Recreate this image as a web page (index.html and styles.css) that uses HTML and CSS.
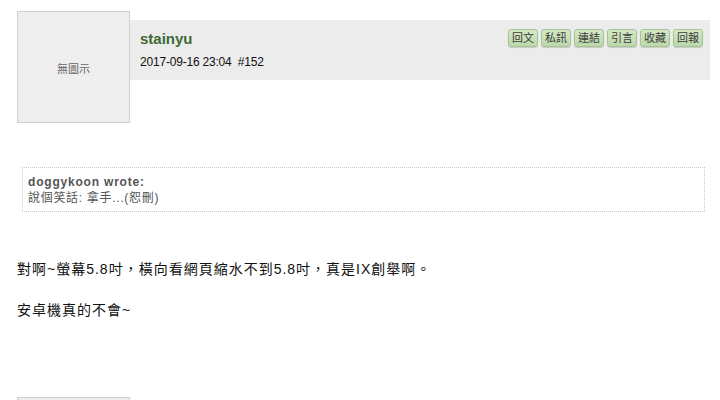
FILE: index.html
```html
<!DOCTYPE html>
<html>
<head>
<meta charset="utf-8">
<link rel="stylesheet" href="styles.css">
</head>
<body>
<div class="post">
  <div class="post-head">
    <div class="avatar">無圖示</div>
    <div class="bar">
      <div class="who">
        <div class="name">stainyu</div>
        <div class="meta">2017-09-16 23:04&nbsp;&nbsp;#152</div>
      </div>
      <div class="actions">
        <span class="btn">回文</span>
        <span class="btn">私訊</span>
        <span class="btn">連結</span>
        <span class="btn">引言</span>
        <span class="btn">收藏</span>
        <span class="btn">回報</span>
      </div>
    </div>
  </div>
  <div class="quote">
    <div class="q-author">doggykoon wrote:</div>
    <div class="q-text">說個笑話: 拿手...(恕刪)</div>
  </div>
  <div class="content">
    <p>對啊~螢幕5.8吋，橫向看網頁縮水不到5.8吋，真是IX創舉啊。</p>
    <p>安卓機真的不會~</p>
  </div>
</div>
<div class="post">
  <div class="post-head">
    <div class="avatar">無圖示</div>
  </div>
</div>
</body>
</html>
```
FILE: styles.css
```css
html, body {
  margin: 0;
  padding: 0;
  background: #fff;
  overflow: hidden;
  font-family: "Liberation Sans", Arial, "Noto Sans CJK TC", sans-serif;
  color: #111;
}
.post {
  padding: 11px 10px 0 17px;
}
.post-head {
  display: flex;
  align-items: flex-start;
}
.avatar {
  box-sizing: border-box;
  width: 113px;
  height: 112px;
  flex: none;
  border: 1px solid #cfcfcf;
  background: #eeeeee;
  display: flex;
  align-items: center;
  justify-content: center;
  font-size: 11px;
  color: #666;
  padding-top: 2px;
}
.bar {
  flex: 1;
  margin-top: 9px;
  height: 60px;
  background: #ececec;
  display: flex;
  justify-content: space-between;
  align-items: flex-start;
  padding: 0 7px 0 10px;
}
.who {
  padding-top: 10px;
}
.name {
  font-size: 15px;
  font-weight: bold;
  color: #3d6a33;
  line-height: 18px;
}
.meta {
  margin-top: 7px;
  font-size: 12px;
  color: #111;
  line-height: 14px;
  letter-spacing: -0.2px;
}
.actions {
  display: flex;
  gap: 3px;
  padding-top: 9px;
}
.btn {
  display: inline-block;
  box-sizing: border-box;
  height: 18px;
  padding: 0 3px;
  font-size: 11px;
  line-height: 16px;
  color: #3a3a3a;
  background: linear-gradient(#d4e8c6, #bcd8aa);
  border: 1px solid #a6c494;
  border-radius: 3px;
  box-shadow: 0 1px 1px rgba(0,0,0,0.15);
}
.quote {
  margin: 44px 5px 0 5px;
  border: 1px dotted #c8c8c8;
  padding: 6px 5px 5px 5px;
  color: #555;
  line-height: 16px;
}
.q-author {
  font-weight: bold;
  font-size: 12px;
  letter-spacing: 0.8px;
}
.q-text {
  font-size: 12px;
  letter-spacing: 0.7px;
}
.content {
  margin-top: 47px;
  font-size: 14px;
  letter-spacing: 1px;
  line-height: 20px;
}
.content p {
  margin: 0 0 21px 0;
}
.post + .post {
  padding-top: 56px;
}
```
